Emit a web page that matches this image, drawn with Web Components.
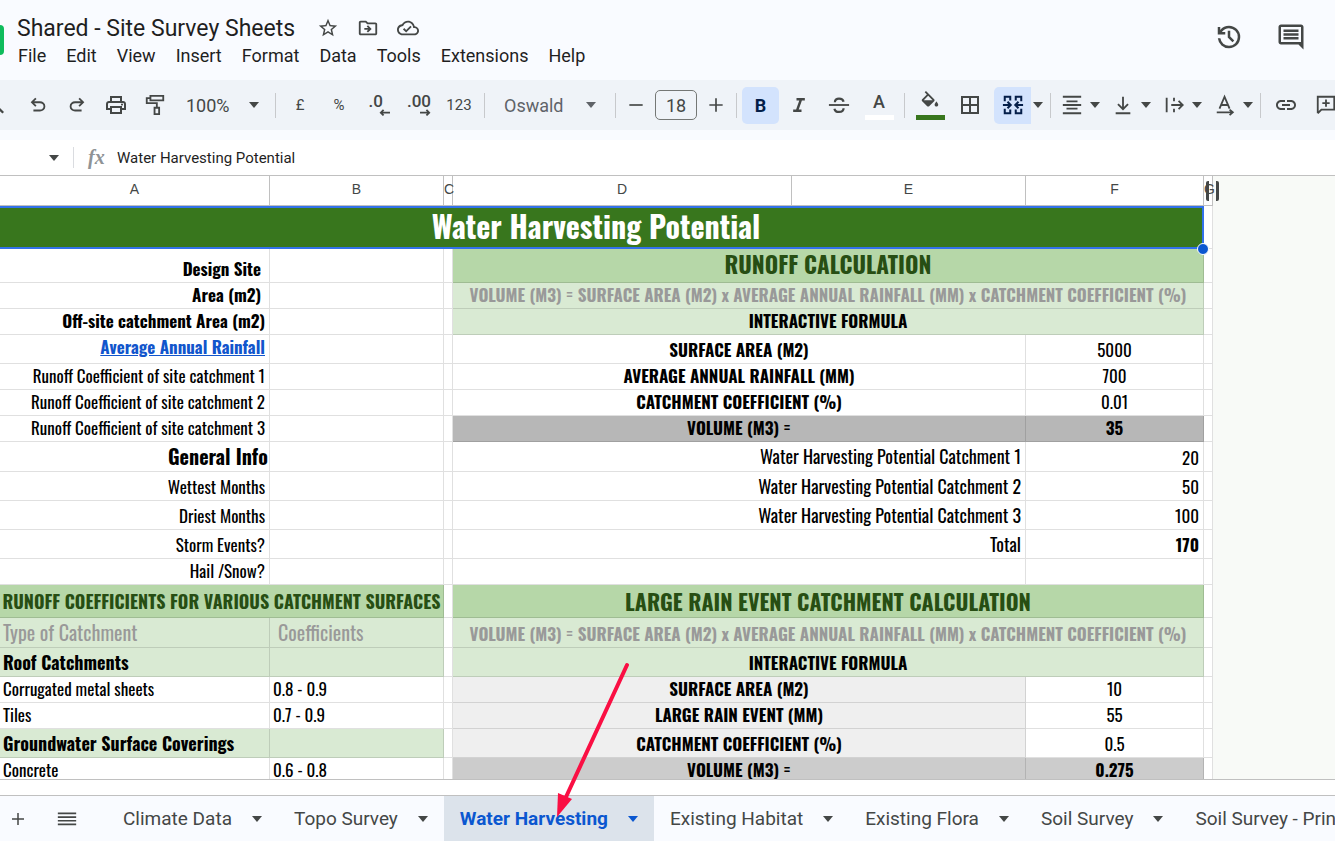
<!DOCTYPE html>
<html lang="en">
<head>
<meta charset="utf-8">
<title>Shared - Site Survey Sheets</title>
<style>
  body {
    margin: 0;
    background-color: #f9fbff;
    font-family: "Google Sans", Roboto, "Liberation Sans", sans-serif;
    color: #1f1f1f;
  }
</style>
</head>
<body>
<survey-app></survey-app>

<script>
const icons = {
  star: ["0 0 24 24", '<path d="M22 9.24l-7.19-.62L12 2 9.19 8.63 2 9.24l5.46 4.73L5.82 21 12 17.27 18.18 21l-1.63-7.03L22 9.24zM12 15.4l-3.76 2.27 1-4.28-3.32-2.88 4.38-.38L12 6.1l1.71 4.04 4.38.38-3.32 2.88 1 4.28L12 15.4z"/>'],
  move: ["0 0 24 24", '<path d="M20 6h-8l-2-2H4c-1.1 0-2 .9-2 2v12c0 1.1.9 2 2 2h16c1.1 0 2-.9 2-2V8c0-1.1-.9-2-2-2zm0 12H4V6h5.17l2 2H20v10zM12 17l4-4-4-4-1.4 1.4 1.6 1.6H8v2h4.2l-1.6 1.6z"/>'],
  cloud: ["0 0 24 24", '<path d="M19.35 10.04C18.67 6.59 15.64 4 12 4 9.11 4 6.6 5.64 5.35 8.04 2.34 8.36 0 10.91 0 14c0 3.31 2.69 6 6 6h13c2.76 0 5-2.24 5-5 0-2.64-2.05-4.78-4.65-4.96zM19 18H6c-2.21 0-4-1.79-4-4 0-2.05 1.53-3.76 3.56-3.97l1.07-.11.5-.95C8.08 7.14 9.94 6 12 6c2.62 0 4.88 1.86 5.39 4.43l.3 1.5 1.53.11c1.56.1 2.78 1.41 2.78 2.96 0 1.65-1.35 3-3 3zm-9-3.82l-2.09-2.09L6.5 13.5 10 17l6.01-6.01-1.41-1.41z"/>'],
  history: ["0 -960 960 960", '<path d="M480-120q-138 0-240.5-91.5T122-440h82q14 104 92.5 172T480-200q117 0 198.5-81.5T760-480q0-117-81.5-198.5T480-760q-69 0-129 32t-101 88h110v80H120v-240h80v94q51-64 124.5-99T480-840q75 0 140.5 28.5t114 77q48.5 48.5 77 114T840-480q0 75-28.5 140.5t-77 114q-48.5 48.5-114 77T480-120Zm112-192L440-464v-216h80v184l128 128-56 56Z"/>'],
  comment: ["0 0 24 24", '<path d="M22 4c0-1.100-.9-2-2-2H4c-1.100 0-2 .9-2 2v12c0 1.100.9 2 2 2h14l4 4V4zM20 16H4V4h16v12zM6 12h12v2H6zm0-3h12v2H6zm0-3h12v2H6z"/>'],
  undo: ["0 -960 960 960", '<path d="M280-200v-80h284q63 0 109.5-40T720-420q0-60-46.5-100T564-560H312l104 104-56 56-200-200 200-200 56 56-104 104h252q97 0 166.5 63T800-420q0 94-69.5 157T564-200H280Z"/>'],
  redo: ["0 -960 960 960", '<path transform="matrix(-1 0 0 1 960 0)" d="M280-200v-80h284q63 0 109.5-40T720-420q0-60-46.5-100T564-560H312l104 104-56 56-200-200 200-200 56 56-104 104h252q97 0 166.5 63T800-420q0 94-69.5 157T564-200H280Z"/>'],
  print: ["0 -960 960 960", '<path d="M640-640v-120H320v120h-80v-200h480v200h-80Zm80 180q17 0 28.500-11.500T760-500q0-17-11.500-28.500T720-540q-17 0-28.500 11.500T680-500q0 17 11.500 28.500T720-460Zm-80 260v-160H320v160h320Zm80 80H240v-160H80v-240q0-51 35-85.500t85-34.500h560q51 0 85.500 34.500T880-520v240H720v160Zm80-240v-160q0-17-11.500-28.500T760-560H200q-17 0-28.500 11.500T160-520v160h80v-80h480v80h80Z"/>'],
  paint: ["0 0 24 24", '<path fill="none" stroke="currentColor" stroke-width="2" d="M7 2h14v5H7zM7 4.500H3V10h11v5M11.500 15h5v7h-5z"/>'],
  search: ["0 0 24 24", '<path fill="none" stroke="currentColor" stroke-width="2.400" d="M6 11l9.500 9.500"/>'],
  minus: ["0 0 24 24", '<path d="M4 11h16v2H4z"/>'],
  plus: ["0 0 24 24", '<path d="M4 11h7V4h2v7h7v2h-7v7h-2v-7H4z"/>'],
  italic: ["0 0 24 24", '<path fill="none" stroke="currentColor" stroke-width="3" d="M9 5h10M5 19h10M14.500 5l-5 14"/>'],
  strike: ["0 0 24 24", '<path fill="none" stroke="currentColor" stroke-width="2" d="M1 12h22"/><path fill="none" stroke="currentColor" stroke-width="2.400" d="M17 8.500C16.500 6 14.500 5 12 5S7.500 6 7.500 9M7 16c.5 2.500 2.500 3.600 5 3.600s5-1 5-4"/>'],
  fill: ["0 0 24 24", '<path d="M16.560 8.940L7.620 0 6.210 1.410l2.380 2.380-5.150 5.150c-.59.59-.59 1.540 0 2.120l5.500 5.500c.29.29.68.44 1.060.44s.77-.15 1.060-.44l5.500-5.500c.59-.58.59-1.530 0-2.120zM5.210 10L10 5.210 14.790 10H5.210zM19 11.500s-2 2.170-2 3.500c0 1.100.9 2 2 2s2-.9 2-2c0-1.330-2-3.500-2-3.500z"/>'],
  borders: ["0 0 24 24", '<path d="M3 3v18h18V3H3zm8 16H5v-6h6v6zm0-8H5V5h6v6zm8 8h-6v-6h6v6zm0-8h-6V5h6v6z"/>'],
  merge: ["0 0 24 24", '<path fill="none" stroke="currentColor" stroke-width="2.200" d="M9 3H3v5M3 16v5h6M9 2v5M9 22v-5M15 7V2M15 3h6v5M21 16v5h-6M15 22v-5M1 12h8M6 8.500L9.500 12 6 15.500M23 12h-8M18 8.500L14.500 12l3.500 3.500"/>'],
  align: ["0 0 24 24", '<path d="M2 2h20v2H2zm4 5h12v2H6zm-4 4h20v2H2zm4 4h12v2H6zm-4 5h20v2H2z"/>'],
  bottom: ["0 0 24 24", '<path fill="none" stroke="currentColor" stroke-width="2" d="M4 21h16M12 3v13M6.500 11l5.500 5.500 5.500-5.500"/>'],
  wrap: ["0 0 24 24", '<path fill="none" stroke="currentColor" stroke-width="2" d="M4 4v16M12 4v4M12 16v4M9 12h12M17 7.500l4.500 4.500-4.500 4.500"/>'],
  rotate: ["0 0 24 24", '<path fill="none" stroke="currentColor" stroke-width="2" d="M6 16L11.500 3 17 16M8 12h7M3 20h17M17 17l3.500 3-3.500 3"/>'],
  link: ["0 0 24 24", '<path d="M3.900 12c0-1.710 1.390-3.100 3.100-3.100h4V7H7c-2.760 0-5 2.240-5 5s2.240 5 5 5h4v-1.900H7c-1.710 0-3.100-1.390-3.100-3.100zM8 13h8v-2H8v2zm9-6h-4v1.900h4c1.710 0 3.100 1.390 3.100 3.100s-1.390 3.100-3.100 3.100h-4V17h4c2.760 0 5-2.240 5-5s-2.240-5-5-5z"/>'],
  note: ["0 0 24 24", '<path fill="none" stroke="currentColor" stroke-width="2" d="M3 21V3h18v14H7l-4 4M12 6v8M8 10h8"/>'],
  menu: ["0 0 24 24", '<path d="M2 5h20v1.800H2zm0 4h20v1.800H2zm0 4h20v1.800H2zm0 4h20v1.800H2z"/>'],
  left: ["0 0 12 8", '<path fill="none" stroke="currentColor" stroke-width="2" d="M12 4H2M5 1L2 4l3 3"/>'],
  right: ["0 0 12 8", '<path fill="none" stroke="currentColor" stroke-width="2" d="M0 4h10M7 1l3 3-3 3"/>'],
  caret: ["0 0 10 6", '<path d="M0 0h10L5 6z"/>'],
};

function define(name, html, setup) {
  const template = document.createElement("template");
  template.innerHTML = html;
  customElements.define(name, class extends HTMLElement {
    constructor() {
      super();
      this.attachShadow({ mode: "open" });
      this.shadowRoot.appendChild(template.content.cloneNode(true));
    }
    connectedCallback() {
      if (setup) setup(this, this.shadowRoot);
    }
  });
}

define("svg-icon", `
  <style>
    :host { display: inline-flex; flex: none; width: var(--size, 22px); }
    svg { width: 100%; fill: currentColor; display: block; }
  </style>
  <svg aria-hidden="true"></svg>
`, (el, root) => {
  const [box, shape] = icons[el.getAttribute("name")];
  const svg = root.querySelector("svg");
  svg.setAttribute("viewBox", box);
  svg.innerHTML = shape;
});

define("icon-button", `
  <style>
    :host { display: flex; flex: none; width: 40px; height: 37px; }
    button {
      flex: 1;
      display: flex;
      flex-direction: column;
      align-items: center;
      justify-content: center;
      padding: 0;
      border: 0;
      border-radius: 5px;
      background: none;
      color: inherit;
      font: inherit;
    }
    :host([active]) button { background-color: #d3e3fd; color: #041e49; }
    :host([split]) button { border-radius: 5px 0 0 5px; }
  </style>
  <button type="button"><slot></slot></button>
`, (el, root) => {
  root.querySelector("button").setAttribute("aria-label", el.getAttribute("label"));
});

define("doc-header", `
  <style>
    :host { display: flex; align-items: flex-start; height: 80px; color: #444746; }
    .logo { width: 4px; height: 30px; margin-top: 25px; border-radius: 0 4px 4px 0; background-color: #0fbc5c; }
    .info { flex: 1; margin-left: 13px; padding-top: 14px; }
    .name { display: flex; align-items: center; height: 28px; --size: 22px; }
    h1 { margin: 0 13px 0 0; font-size: 23px; font-weight: 400; color: #1f1f1f; white-space: nowrap; }
    nav { display: flex; gap: 20px; padding: 2px 1px; }
    nav button { padding: 0; border: 0; background: none; font: inherit; font-size: 18px; line-height: 24px; color: #1f1f1f; }
    .tools { display: flex; gap: 22px; padding: 18px 24px 0 0; --size: 30px; }
  </style>
  <div class="logo"></div>
  <div class="info">
    <div class="name">
      <h1>Shared - Site Survey Sheets</h1>
      <icon-button label="Star"><svg-icon name="star"></svg-icon></icon-button>
      <icon-button label="Move"><svg-icon name="move"></svg-icon></icon-button>
      <icon-button label="Saved to Drive"><svg-icon name="cloud"></svg-icon></icon-button>
    </div>
    <nav></nav>
  </div>
  <div class="tools">
    <icon-button label="Version history"><svg-icon name="history"></svg-icon></icon-button>
    <icon-button label="Comments"><svg-icon name="comment"></svg-icon></icon-button>
  </div>
`, (el, root) => {
  const nav = root.querySelector("nav");
  for (const item of ["File", "Edit", "View", "Insert", "Format", "Data", "Tools", "Extensions", "Help"]) {
    const button = document.createElement("button");
    button.type = "button";
    button.textContent = item;
    nav.appendChild(button);
  }
});

define("split-button", `
  <style>
    :host { display: flex; flex: none; align-items: center; }
    icon-button { width: 32px; }
    .more { width: 14px; --size: 10px; }
  </style>
  <icon-button><slot></slot></icon-button>
  <icon-button class="more" label="More options"><svg-icon name="caret"></svg-icon></icon-button>
`, (el, root) => {
  const main = root.querySelector("icon-button");
  main.shadowRoot.querySelector("button").setAttribute("aria-label", el.getAttribute("label"));
});

define("tool-bar", `
  <style>
    :host {
      display: flex;
      align-items: center;
      height: 50px;
      margin-bottom: 10px;
      overflow: hidden;
      background-color: #eff3f8;
      color: #444746;
      font-size: 18px;
    }
    hr { flex: none; width: 1px; height: 25px; margin: 0 5px; border: 0; background-color: #c7c9cc; }
    .edge { width: 18px; }
    .edge svg-icon { margin-left: -18px; }
    .narrow { width: 38px; }
    .pick {
      flex: none;
      display: flex;
      align-items: center;
      justify-content: space-between;
      height: 37px;
      border: 0;
      background: none;
      color: inherit;
      font: inherit;
      --size: 10px;
    }
    .zoom { width: 96px; padding: 0 11px 0 12px; }
    .font { width: 120px; padding: 0 14px; color: #5f6368; }
    .small { font-size: 15px; }
    .step { width: 30px; --size: 20px; }
    input {
      flex: none;
      box-sizing: border-box;
      width: 42px;
      height: 30px;
      margin: 0 4px;
      border: 1px solid #747775;
      border-radius: 5px;
      background: none;
      color: inherit;
      font: inherit;
      text-align: center;
    }
    .bold { width: 37px; }
    .merge { width: 37px; margin-left: 4px; }
    .caret { width: 14px; --size: 10px; }
    .digits {
      display: flex;
      flex-direction: column;
      align-items: flex-start;
      min-width: 21px;
      line-height: 14px;
      font-size: 17px;
      font-weight: 500;
      --size: 11px;
    }
    .digits svg-icon { align-self: flex-end; margin-top: 1px; }
    .swatch { width: 29px; height: 5px; margin-top: 2px; background-color: #fff; }
    .green { background-color: #38761d; }
    .letter { line-height: 22px; font-weight: 500; }
    split-button + split-button { margin-left: 5px; }
  </style>
  <icon-button class="edge" label="Search menus"><svg-icon name="search"></svg-icon></icon-button>
  <icon-button label="Undo"><svg-icon name="undo"></svg-icon></icon-button>
  <icon-button class="narrow" label="Redo"><svg-icon name="redo"></svg-icon></icon-button>
  <icon-button label="Print"><svg-icon name="print" style="--size: 24px"></svg-icon></icon-button>
  <icon-button class="narrow" label="Paint format"><svg-icon name="paint"></svg-icon></icon-button>
  <button type="button" class="pick zoom">100% <svg-icon name="caret"></svg-icon></button>
  <hr>
  <icon-button class="narrow small" label="Currency">£</icon-button>
  <icon-button class="small" label="Percent">%</icon-button>
  <icon-button label="Fewer decimals"><span class="digits">.0<svg-icon name="left"></svg-icon></span></icon-button>
  <icon-button label="More decimals"><span class="digits">.00<svg-icon name="right"></svg-icon></span></icon-button>
  <icon-button class="small" label="More formats">123</icon-button>
  <hr>
  <button type="button" class="pick font">Oswald <svg-icon name="caret"></svg-icon></button>
  <hr>
  <icon-button class="step" label="Smaller"><svg-icon name="minus"></svg-icon></icon-button>
  <input aria-label="Font size" value="18">
  <icon-button class="step" label="Larger"><svg-icon name="plus"></svg-icon></icon-button>
  <hr>
  <icon-button class="bold" active label="Bold"><b>B</b></icon-button>
  <icon-button label="Italic"><svg-icon name="italic" style="--size: 20px"></svg-icon></icon-button>
  <icon-button label="Strikethrough"><svg-icon name="strike"></svg-icon></icon-button>
  <icon-button label="Text colour"><span class="letter">A</span><span class="swatch"></span></icon-button>
  <hr>
  <icon-button label="Fill colour"><svg-icon name="fill"></svg-icon><span class="swatch green"></span></icon-button>
  <icon-button label="Borders"><svg-icon name="borders" style="--size: 24px"></svg-icon></icon-button>
  <icon-button class="merge" active split label="Merge cells"><svg-icon name="merge"></svg-icon></icon-button>
  <icon-button class="caret" label="Merge type"><svg-icon name="caret"></svg-icon></icon-button>
  <hr>
  <split-button label="Horizontal align"><svg-icon name="align"></svg-icon></split-button>
  <split-button label="Vertical align"><svg-icon name="bottom"></svg-icon></split-button>
  <split-button label="Text wrapping"><svg-icon name="wrap"></svg-icon></split-button>
  <split-button label="Text rotation"><svg-icon name="rotate"></svg-icon></split-button>
  <hr>
  <icon-button label="Insert link"><svg-icon name="link" style="--size: 24px"></svg-icon></icon-button>
  <icon-button label="Insert comment"><svg-icon name="note"></svg-icon></icon-button>
`);

define("formula-bar", `
  <style>
    :host {
      display: flex;
      align-items: center;
      height: 35px;
      border-bottom: 1px solid #c0c0c0;
      background-color: #fff;
      color: #444746;
    }
    .box { width: 25px; margin-left: 41px; --size: 10px; }
    hr { width: 1px; height: 21px; margin: 0 14px 0 7px; border: 0; background-color: #dadce0; }
    i { width: 29px; font: italic 700 20px "Liberation Serif", serif; color: #8f9396; }
    input { flex: 1; padding: 0; border: 0; outline: 0; background: none; font: inherit; font-size: 15px; color: #1f1f1f; }
  </style>
  <icon-button class="box" label="Name box"><svg-icon name="caret"></svg-icon></icon-button>
  <hr>
  <i>fx</i>
  <input aria-label="Formula" value="Water Harvesting Potential">
`);

// one entry per row: height, then the cells as [text, classes, colspan]
const formula = "VOLUME (M3) = SURFACE AREA (M2) x AVERAGE ANNUAL RAINFALL (MM) x CATCHMENT COEFFICIENT (%)";
const rows = [
  [43, ["Water Harvesting Potential", "title", 6], [""]],
  [34, ["Design Site", "right b pad"], [""], [""], ["RUNOFF CALCULATION", "green h1", 3], [""]],
  [26, ["Area (m2)", "right b pad"], [""], [""], [formula, "light muted b", 3], [""]],
  [26, ["Off-site catchment Area (m2)", "right b"], [""], [""], ["INTERACTIVE FORMULA", "light b", 3], [""]],
  [29, ["Average Annual Rainfall", "right b top link"], [""], [""], ["SURFACE AREA (M2)", "b", 2], ["5000"], [""]],
  [26, ["Runoff Coefficient of site catchment 1", "right"], [""], [""], ["AVERAGE ANNUAL RAINFALL (MM)", "b", 2], ["700"], [""]],
  [26, ["Runoff Coefficient of site catchment 2", "right"], [""], [""], ["CATCHMENT COEFFICIENT (%)", "b", 2], ["0.01"], [""]],
  [26, ["Runoff Coefficient of site catchment 3", "right"], [""], [""], ["VOLUME (M3) =", "grey b", 2], ["35", "grey b"], [""]],
  [30, ["General Info", "right h3 b flush"], [""], [""], ["Water Harvesting Potential Catchment 1", "right large", 2], ["20", "right"], [""]],
  [29, ["Wettest Months", "right"], [""], [""], ["Water Harvesting Potential Catchment 2", "right large", 2], ["50", "right"], [""]],
  [29, ["Driest Months", "right"], [""], [""], ["Water Harvesting Potential Catchment 3", "right large", 2], ["100", "right"], [""]],
  [29, ["Storm Events?", "right"], [""], [""], ["Total", "right large", 2], ["170", "right b"], [""]],
  [26, ["Hail /Snow?", "right"], [""], [""], ["", "", 2], [""], [""]],
  [33, ["RUNOFF COEFFICIENTS FOR VARIOUS CATCHMENT SURFACES", "green over", 2], [""], ["LARGE RAIN EVENT CATCHMENT CALCULATION", "green h2", 3], [""]],
  [30, ["Type of Catchment", "light left muted h3"], ["Coefficients", "light left muted h3 indent"], [""], [formula, "light muted b", 3], [""]],
  [29, ["Roof Catchments", "light left large b"], ["", "light"], [""], ["INTERACTIVE FORMULA", "light b", 3], [""]],
  [26, ["Corrugated metal sheets", "left"], ["0.8 - 0.9", "left"], [""], ["SURFACE AREA (M2)", "pale b", 2], ["10"], [""]],
  [26, ["Tiles", "left"], ["0.7 - 0.9", "left"], [""], ["LARGE RAIN EVENT (MM)", "pale b", 2], ["55"], [""]],
  [29, ["Groundwater Surface Coverings", "light left large b"], ["", "light"], [""], ["CATCHMENT COEFFICIENT (%)", "pale b", 2], ["0.5"], [""]],
  [26, ["Concrete", "left"], ["0.6 - 0.8", "left"], [""], ["VOLUME (M3) =", "silver b", 2], ["0.275", "silver b"], [""]],
];

define("sheet-grid", `
  <style>
    :host { display: block; overflow: hidden; background-color: #f8faf7; border-bottom: 1px solid #c0c0c0; }
    table {
      width: 1213px;
      table-layout: fixed;
      border-collapse: separate;
      border-spacing: 0;
      background-color: #fff;
      color: #000;
      font: 17px/24px Oswald, "Liberation Sans Narrow", sans-serif;
    }
    th {
      position: relative;
      height: 29px;
      padding: 0;
      border: solid #c0c0c0;
      border-width: 0 1px 1px 0;
      vertical-align: top;
      font: 14px/27px "Liberation Sans", sans-serif;
      color: #444746;
    }
    td {
      box-sizing: border-box;
      padding: 0 4px 1px;
      border: solid rgba(0, 0, 0, 0.12);
      border-width: 0 1px 1px 0;
      text-align: center;
      vertical-align: bottom;
      white-space: nowrap;
    }
    .right { text-align: right; padding-left: 0; }
    .left { text-align: left; padding-left: 3px; }
    .pad { padding-right: 8px; }
    .flush { padding-right: 1px; }
    .indent { padding-left: 8px; }
    .top { vertical-align: top; }
    .over { padding: 0; font-size: 18px; vertical-align: middle; }
    .b { font-weight: 700; }
    .large, .h3 { padding-bottom: 0; line-height: 28px; vertical-align: top; }
    .large { font-size: 18px; }
    .h3 { font-size: 20px; }
    .h2, .h1 { line-height: 30px; vertical-align: middle; }
    .h2 { font-size: 22px; }
    .h1 { font-size: 23px; padding-bottom: 3px; }
    .green { background-color: #b6d7a8; color: #274e13; font-weight: 700; }
    .light { background-color: #d9ead3; }
    .grey { background-color: #b7b7b7; }
    .silver { background-color: #ccc; }
    .pale { background-color: #efefef; }
    .muted { color: #999; }
    a { color: #1155cc; }
    .title {
      position: relative;
      padding: 0 10px 3px 0;
      border: 2px solid #3271ea;
      border-left: 0;
      background-color: #38761d;
      color: #fff;
      font-size: 30px;
      line-height: 36px;
      font-weight: 700;
    }
    .handle {
      position: absolute;
      right: -7px;
      bottom: -8px;
      width: 10px;
      height: 10px;
      border: 1px solid #fff;
      border-radius: 50%;
      background-color: #0b57d0;
      z-index: 1;
    }
    .grip {
      position: absolute;
      left: 2px;
      top: 5px;
      width: 7px;
      height: 20px;
      border: solid #444746;
      border-width: 0 3px;
      border-radius: 2px;
    }
  </style>
  <table>
    <colgroup>
      <col style="width: 270px"><col style="width: 174px"><col style="width: 9px"><col style="width: 339px">
      <col style="width: 234px"><col style="width: 178px"><col style="width: 9px">
    </colgroup>
    <thead><tr></tr></thead>
    <tbody></tbody>
  </table>
`, (el, root) => {
  const head = root.querySelector("thead tr");
  for (const letter of "ABCDEFG") {
    const th = document.createElement("th");
    th.scope = "col";
    th.textContent = letter;
    head.appendChild(th);
  }
  head.lastChild.insertAdjacentHTML("beforeend", '<span class="grip"></span>');

  const body = root.querySelector("tbody");
  for (const [height, ...cells] of rows) {
    const tr = body.insertRow();
    tr.style.height = height + "px";
    for (const [text, classes = "", span = 1] of cells) {
      const td = tr.insertCell();
      td.className = classes;
      td.colSpan = span;
      if (classes.includes("link")) {
        td.innerHTML = `<a href="#rainfall">${text}</a>`;
      } else {
        td.textContent = text;
      }
      if (classes === "title") {
        td.insertAdjacentHTML("beforeend", '<span class="handle"></span>');
      }
    }
  }
});

define("sheet-tab", `
  <style>
    :host { display: flex; flex: none; }
    button {
      display: flex;
      align-items: center;
      gap: 20px;
      padding: 0 16px;
      border: 0;
      background: none;
      color: inherit;
      font: inherit;
      white-space: nowrap;
      --size: 10px;
    }
    :host([active]) button { background-color: #dce3eb; color: #0b57d0; font-weight: 700; }
  </style>
  <button type="button"><slot></slot><svg-icon name="caret"></svg-icon></button>
`);

define("tab-bar", `
  <style>
    :host {
      display: flex;
      height: 45px;
      margin-top: 15px;
      border-top: 1px solid #c0c0c0;
      overflow: hidden;
      background-color: #f9fbff;
      color: #444746;
      font-size: 19px;
    }
    icon-button { height: 45px; --size: 18px; }
    .add { width: 36px; }
    .all { width: 62px; margin-right: 9px; --size: 22px; }
  </style>
  <icon-button class="add" label="Add sheet"><svg-icon name="plus"></svg-icon></icon-button>
  <icon-button class="all" label="All sheets"><svg-icon name="menu"></svg-icon></icon-button>
  <sheet-tab>Climate Data</sheet-tab>
  <sheet-tab>Topo Survey</sheet-tab>
  <sheet-tab active>Water Harvesting</sheet-tab>
  <sheet-tab>Existing Habitat</sheet-tab>
  <sheet-tab>Existing Flora</sheet-tab>
  <sheet-tab>Soil Survey</sheet-tab>
  <sheet-tab>Soil Survey - Principles</sheet-tab>
`);

// pointer drawn on top of the sheet, aimed at the active tab
define("red-arrow", `
  <style>
    :host { position: absolute; left: 550px; bottom: 20px; width: 84px; height: 160px; pointer-events: none; }
    svg { display: block; }
  </style>
  <svg width="84" height="160" viewBox="0 0 84 160" aria-hidden="true">
    <path d="M77 4L16 136" fill="none" stroke="#fa0f43" stroke-width="4" stroke-linecap="round"/>
    <path d="M7 156l1-24 14 6z" fill="#fa0f43"/>
  </svg>
`);

define("survey-app", `
  <style>
    :host { display: flex; flex-direction: column; position: relative; height: 100vh; overflow: hidden; }
    sheet-grid { flex: 1; min-height: 0; }
    .foot { background-color: #fff; }
  </style>
  <doc-header></doc-header>
  <tool-bar></tool-bar>
  <formula-bar></formula-bar>
  <sheet-grid></sheet-grid>
  <div class="foot"><tab-bar></tab-bar></div>
  <red-arrow></red-arrow>
`);
</script>
</body>
</html>
